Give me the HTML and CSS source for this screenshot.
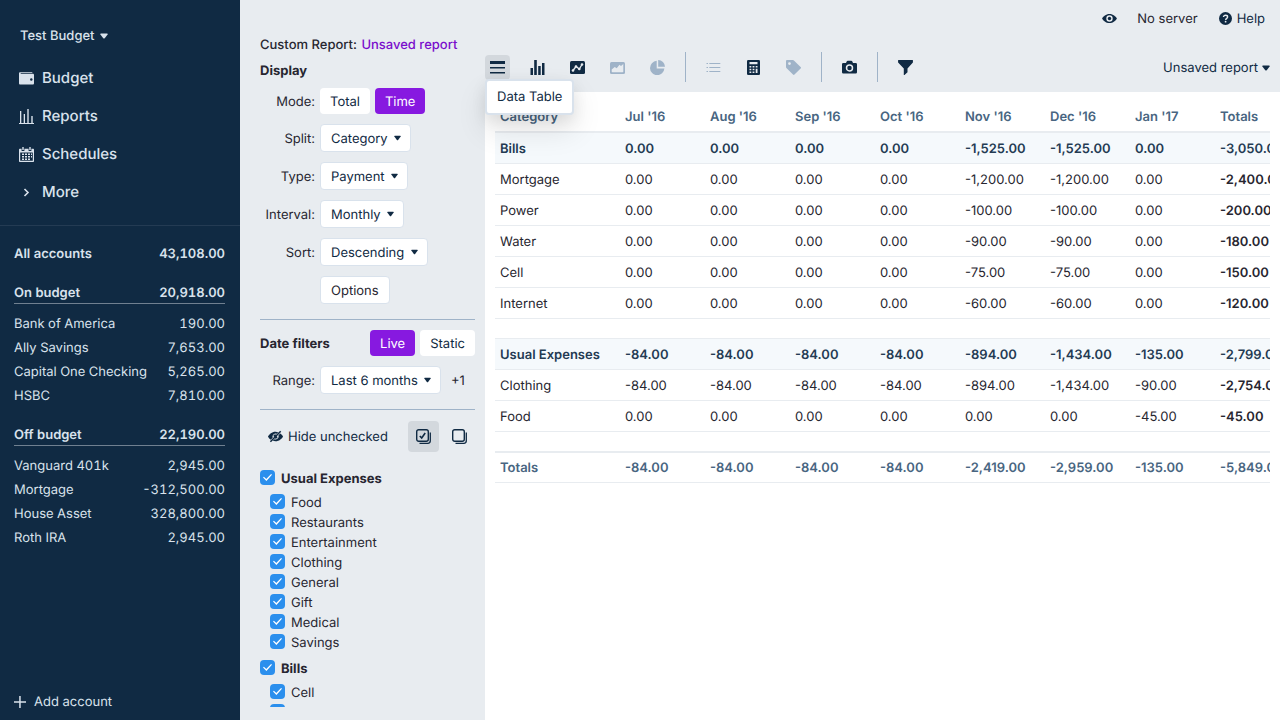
FILE: index.html
```html
<!DOCTYPE html>
<html lang="en">
<head>
<meta charset="utf-8">
<title>Custom Report</title>
<link rel="stylesheet" href="styles.css">
</head>
<body>
<svg class="defs" aria-hidden="true">
  <symbol id="caret" viewBox="0 0 8 6"><path d="M1 .5h6q1 0 .6.9L4.7 5.2q-.7.7-1.4 0L.4 1.4Q0 .5 1 .5z"/></symbol>
</svg>
<div class="app">
  <aside class="sidebar">
    <button class="budget-name">Test Budget <svg class="caret"><use href="#caret"/></svg></button>
    <nav class="nav">
      <a href="#"><svg viewBox="0 0 15 15"><path d="M1.2 1.2h11.6c.5 0 .7.4.7.8H1.7v.7h12c.8 0 1.3.5 1.3 1.2v8.300c0 .7-.5 1.300-1.300 1.300H1.300C.5 13.500 0 13 0 12.200V2.500c0-.8.5-1.300 1.200-1.300z"/><circle cx="12.300" cy="8.500" r="1.200" fill="#102a43"/></svg>Budget</a>
      <a href="#"><svg viewBox="0 0 15 15"><path d="M0 14h15v1H0zM1 2h1.300v12H1zM4.700 5H6v9H4.700zM8.300 0h1.400v14H8.300zM12.300 7h1.400v7h-1.400z"/></svg>Reports</a>
      <a href="#"><svg viewBox="0 0 15 15"><path d="M3.300 0h1.400v3H3.300zM10.300 0h1.400v3h-1.400z"/><path fill-rule="evenodd" d="M1 1.700h1.600V4h2.800V1.700h4.200V4h2.800V1.700H14c.6 0 1 .4 1 1V14c0 .6-.4 1-1 1H1c-.6 0-1-.4-1-1V2.700c0-.6.4-1 1-1zM1.200 5.400v8.400h12.600V5.400z"/><path d="M3 6.500h2v1.500H3zM6 6.500h2v1.500H6zM9 6.500h2v1.500H9zM12 6.500h1v1.500h-1zM3 9h2v1.500H3zM6 9h2v1.500H6zM9 9h2v1.500H9zM12 9h1v1.500h-1zM3 11.500h2V13H3zM6 11.500h2V13H6zM9 11.500h2V13H9z"/></svg>Schedules</a>
      <a href="#"><svg viewBox="0 0 15 15"><path d="M5.500 4l3.500 3.500L5.500 11" fill="none" stroke="currentColor" stroke-width="1.600"/></svg>More</a>
    </nav>
    <div class="accounts">
      <a class="account total" href="#"><span>All accounts</span><span>43,108.00</span></a>
      <a class="account group" href="#"><span>On budget</span><span>20,918.00</span></a>
      <a class="account" href="#"><span>Bank of America</span><span>190.00</span></a>
      <a class="account" href="#"><span>Ally Savings</span><span>7,653.00</span></a>
      <a class="account" href="#"><span>Capital One Checking</span><span>5,265.00</span></a>
      <a class="account" href="#"><span>HSBC</span><span>7,810.00</span></a>
      <a class="account group" href="#"><span>Off budget</span><span>22,190.00</span></a>
      <a class="account" href="#"><span>Vanguard 401k</span><span>2,945.00</span></a>
      <a class="account" href="#"><span>Mortgage</span><span>-312,500.00</span></a>
      <a class="account" href="#"><span>House Asset</span><span>328,800.00</span></a>
      <a class="account" href="#"><span>Roth IRA</span><span>2,945.00</span></a>
    </div>
    <button class="add-account"><svg viewBox="0 0 12 12"><path d="M5.200 0h1.500v12H5.200zM0 5.200h12v1.500H0z"/></svg>Add account</button>
  </aside>

  <main class="main">
    <header class="titlebar">
      <button class="plain" aria-label="Toggle privacy mode"><svg class="i15" viewBox="0 0 15 15"><path fill-rule="evenodd" d="M7.500 3C3.800 3 1.300 5.600.3 7.100q-.3.400 0 .8C1.300 9.400 3.800 12 7.500 12s6.200-2.600 7.200-4.100q.3-.4 0-.8C13.700 5.600 11.200 3 7.500 3zm0 1.300a3.200 3.200 0 1 1 0 6.400 3.200 3.200 0 0 1 0-6.400z"/><circle cx="7.500" cy="7.500" r="1.700"/></svg></button>
      <span class="server">No server</span>
      <button class="plain help"><svg class="i13" viewBox="0 0 13 13"><circle cx="6.500" cy="6.500" r="6.500"/><path d="M4.500 5.100c0-2.500 4.100-2.300 4.100-.1 0 1.400-1.900 1.400-1.900 2.900" fill="none" stroke="#e8ecf0" stroke-width="1.400"/><circle cx="6.600" cy="9.700" r=".9" fill="#e8ecf0"/></svg>Help</button>
    </header>

    <div class="report">
      <section class="options">
        <h1 class="report-name">Custom Report: <a href="#">Unsaved report</a></h1>
        <h2 class="heading">Display</h2>
        <div class="field mode"><span class="label">Mode:</span><button class="seg">Total</button><button class="seg on">Time</button></div>
        <div class="field"><label class="label" for="split">Split:</label><span class="select"><select id="split"><option>Category</option></select><svg class="caret"><use href="#caret"/></svg></span></div>
        <div class="field"><label class="label" for="type">Type:</label><span class="select"><select id="type"><option>Payment</option></select><svg class="caret"><use href="#caret"/></svg></span></div>
        <div class="field"><label class="label" for="interval">Interval:</label><span class="select"><select id="interval"><option>Monthly</option></select><svg class="caret"><use href="#caret"/></svg></span></div>
        <div class="field"><label class="label" for="sort">Sort:</label><span class="select"><select id="sort"><option>Descending</option></select><svg class="caret"><use href="#caret"/></svg></span></div>
        <div class="field"><span class="label"></span><button class="boxed">Options</button></div>
        <hr class="rule">
        <div class="dates"><h2 class="heading">Date filters</h2><button class="seg on">Live</button><button class="seg">Static</button></div>
        <div class="field"><label class="label" for="range">Range:</label><span class="select"><select id="range"><option>Last 6 months</option></select><svg class="caret"><use href="#caret"/></svg></span><span class="extra">+1</span></div>
        <hr class="rule">
        <div class="picker">
          <button class="plain hide"><svg class="i15" viewBox="0 0 15 15"><path d="M7.500 2.800c1 0 1.900.2 2.700.5L8.800 4.700a3.200 3.200 0 0 0-4.100 4.100L2.800 10.700C1.600 9.900.7 8.700.2 7.900q-.3-.4 0-.8C1.300 5.400 3.800 2.800 7.500 2.800zM12.300 4.400c1.100.8 2 1.900 2.500 2.700q.3.400 0 .8c-1.100 1.700-3.600 4.300-7.300 4.300-1 0-1.900-.2-2.700-.5l1.500-1.400a3.200 3.200 0 0 0 4.100-4.100z"/><path d="M2.400 12.800L12.700 2.200M5.800 7.400l1.800-1.800M7.300 9.400l1.800-1.800" fill="none" stroke="currentColor" stroke-width="1.500"/></svg>Hide unchecked</button>
          <button class="square on" aria-label="Check all"><svg class="i15" viewBox="0 0 15 15"><rect x=".7" y=".7" width="11.600" height="11.600" rx="2" fill="none" stroke="currentColor" stroke-width="1.400"/><path d="M14.300 3.500v8.300q0 2.500-2.500 2.500H3.500" fill="none" stroke="currentColor" stroke-width="1.300"/><path d="M3.800 7l1.900 2L9.200 4" fill="none" stroke="currentColor" stroke-width="1.600"/></svg></button>
          <button class="square" aria-label="Uncheck all"><svg class="i15" viewBox="0 0 15 15"><rect x=".7" y=".7" width="11.600" height="11.600" rx="2" fill="none" stroke="currentColor" stroke-width="1.400"/><path d="M14.300 3.500v8.300q0 2.500-2.500 2.500H3.500" fill="none" stroke="currentColor" stroke-width="1.300"/></svg></button>
        </div>
        <div class="categories">
          <label class="cat parent"><input type="checkbox" checked>Usual Expenses</label>
          <div class="children">
            <label class="cat"><input type="checkbox" checked>Food</label>
            <label class="cat"><input type="checkbox" checked>Restaurants</label>
            <label class="cat"><input type="checkbox" checked>Entertainment</label>
            <label class="cat"><input type="checkbox" checked>Clothing</label>
            <label class="cat"><input type="checkbox" checked>General</label>
            <label class="cat"><input type="checkbox" checked>Gift</label>
            <label class="cat"><input type="checkbox" checked>Medical</label>
            <label class="cat"><input type="checkbox" checked>Savings</label>
          </div>
          <label class="cat parent"><input type="checkbox" checked>Bills</label>
          <div class="children">
            <label class="cat"><input type="checkbox" checked>Cell</label>
            <label class="cat"><input type="checkbox" checked aria-label="Internet"></label>
          </div>
        </div>
      </section>

      <section class="result">
        <div class="toolbar">
          <div class="tool-wrap">
            <button class="tool on" aria-label="Data Table"><svg class="i15" viewBox="0 0 15 15"><path d="M0 1h15v3H0zM0 7h15v1.500H0zM0 12h15v1.500H0z"/></svg></button>
            <div class="tooltip" role="tooltip">Data Table</div>
          </div>
          <button class="tool" aria-label="Bar graph"><svg class="i15" viewBox="0 0 15 15"><path d="M.5 8H3v7H.5zM4.200 0h2.600v15H4.200zM8.200 6h2.500v9H8.200zM12 3h2.500v12H12z"/></svg></button>
          <button class="tool" aria-label="Line graph"><svg class="i15" viewBox="0 0 15 15"><rect y="1" width="15" height="13" rx="1.500"/><path d="M3 10.500l3-4 3.300 2.500L12 4.500" fill="none" stroke="#e8ecf0" stroke-width="1.300"/><g fill="#e8ecf0"><circle cx="3" cy="10.500" r="1.300"/><circle cx="6" cy="6.500" r="1.300"/><circle cx="9.300" cy="9" r="1.300"/><circle cx="12" cy="4.500" r="1.300"/></g></svg></button>
          <button class="tool" disabled aria-label="Area graph"><svg class="i15" viewBox="0 0 15 15"><rect y="2" width="15" height="12" rx="1.500"/><path d="M1.700 9.500l3-2.500 2 1.200 2.800-3.400 1.500 1.100L13.300 4v7.500q0 .8-.8.800h-10q-.8 0-.8-.8z" fill="#e8ecf0"/></svg></button>
          <button class="tool" disabled aria-label="Donut graph"><svg class="i15" viewBox="0 0 15 15"><path d="M6.700.8v7.700h7.700A7.200 7.200 0 1 1 6.700.8z"/><path d="M8.200 0A7 7 0 0 1 15 6.800H8.200z"/></svg></button>
          <span class="sep"></span>
          <button class="tool" disabled aria-label="Show legend"><svg class="i15" viewBox="0 0 15 15"><path d="M3.300 3h11v1h-11zM3.300 7h11v1h-11zM3.300 11h11v1h-11zM.5 3h1.500v1H.5zM.5 7h1.500v1H.5zM.5 11h1.500v1H.5z"/></svg></button>
          <button class="tool" aria-label="Show summary"><svg class="i15" viewBox="0 0 15 15"><rect x="1" width="13" height="15" rx="1.300"/><path d="M3.500 2h8v2.200h-8zM3.500 6h1.800v1.500H3.500zM6.600 6h1.800v1.500H6.600zM9.700 6h1.800v1.500H9.700zM3.500 8.800h1.800v1.500H3.500zM6.600 8.800h1.800v1.500H6.600zM3.500 11.500h1.800V13H3.500zM6.600 11.500h1.800V13H6.600zM9.700 8.800h1.800V13H9.700z" fill="#e8ecf0"/></svg></button>
          <button class="tool" disabled aria-label="Show labels"><svg class="i15" viewBox="0 0 15 15"><path fill-rule="evenodd" d="M1 0h6q.5 0 .9.400l6.700 6.600q.8.700 0 1.500L8.500 14.600q-.8.800-1.500 0L.4 7.900Q0 7.500 0 7V1q0-1 1-1zm2.500 2.200a1.400 1.400 0 1 0 0 2.800 1.400 1.400 0 0 0 0-2.800z"/></svg></button>
          <span class="sep"></span>
          <button class="tool" aria-label="Take snapshot"><svg class="i15" viewBox="0 0 15 15"><path d="M4 3l.8-1.700q.3-.5.900-.5h3.600q.6 0 .9.500L11 3h2.700q1.300 0 1.300 1.200v8q0 1.300-1.300 1.300H1.300Q0 13.500 0 12.200v-8Q0 3 1.300 3z"/><circle cx="7.500" cy="7.900" r="3" fill="none" stroke="#e8ecf0" stroke-width="1.500"/></svg></button>
          <span class="sep"></span>
          <button class="tool" aria-label="Filter"><svg class="i15" viewBox="0 0 15 15"><path d="M.5 0h14q.8 0 .4 1.500v1.100L9.500 8.500v3.700L6.500 15H5.800V8.500L.1 2.600V1.500Q-.3 0 .5 0z"/></svg></button>
          <button class="plain saved">Unsaved report <svg class="caret"><use href="#caret"/></svg></button>
        </div>

        <div class="sheet">
          <table class="table">
            <thead><tr><th>Category</th><th>Jul '16</th><th>Aug '16</th><th>Sep '16</th><th>Oct '16</th><th>Nov '16</th><th>Dec '16</th><th>Jan '17</th><th>Totals</th></tr></thead>
            <tbody>
              <tr class="group"><td>Bills</td><td>0.00</td><td>0.00</td><td>0.00</td><td>0.00</td><td>-1,525.00</td><td>-1,525.00</td><td>0.00</td><td>-3,050.00</td></tr>
              <tr><td>Mortgage</td><td>0.00</td><td>0.00</td><td>0.00</td><td>0.00</td><td>-1,200.00</td><td>-1,200.00</td><td>0.00</td><td>-2,400.00</td></tr>
              <tr><td>Power</td><td>0.00</td><td>0.00</td><td>0.00</td><td>0.00</td><td>-100.00</td><td>-100.00</td><td>0.00</td><td>-200.00</td></tr>
              <tr><td>Water</td><td>0.00</td><td>0.00</td><td>0.00</td><td>0.00</td><td>-90.00</td><td>-90.00</td><td>0.00</td><td>-180.00</td></tr>
              <tr><td>Cell</td><td>0.00</td><td>0.00</td><td>0.00</td><td>0.00</td><td>-75.00</td><td>-75.00</td><td>0.00</td><td>-150.00</td></tr>
              <tr><td>Internet</td><td>0.00</td><td>0.00</td><td>0.00</td><td>0.00</td><td>-60.00</td><td>-60.00</td><td>0.00</td><td>-120.00</td></tr>
            </tbody>
            <tbody>
              <tr class="gap"><td colspan="9"></td></tr>
              <tr class="group"><td>Usual Expenses</td><td>-84.00</td><td>-84.00</td><td>-84.00</td><td>-84.00</td><td>-894.00</td><td>-1,434.00</td><td>-135.00</td><td>-2,799.00</td></tr>
              <tr><td>Clothing</td><td>-84.00</td><td>-84.00</td><td>-84.00</td><td>-84.00</td><td>-894.00</td><td>-1,434.00</td><td>-90.00</td><td>-2,754.00</td></tr>
              <tr><td>Food</td><td>0.00</td><td>0.00</td><td>0.00</td><td>0.00</td><td>0.00</td><td>0.00</td><td>-45.00</td><td>-45.00</td></tr>
            </tbody>
            <tfoot>
              <tr class="gap last"><td colspan="9"></td></tr>
              <tr class="sum"><td>Totals</td><td>-84.00</td><td>-84.00</td><td>-84.00</td><td>-84.00</td><td>-2,419.00</td><td>-2,959.00</td><td>-135.00</td><td>-5,849.00</td></tr>
            </tfoot>
          </table>
        </div>
      </section>
    </div>
  </main>
</div>
</body>
</html>
```
FILE: styles.css
```css
* { box-sizing: border-box; }
body { margin: 0; font: 13px/16px Inter, "Liberation Sans", sans-serif; color: #272630; background: #e8ecf0; text-rendering: geometricPrecision; }
button, select, input { font: inherit; color: inherit; margin: 0; text-rendering: inherit; }
button { border: 0; background: none; padding: 0; display: flex; align-items: center; cursor: pointer; white-space: nowrap; }
a { color: inherit; text-decoration: none; }
svg { fill: currentColor; flex: none; display: block; }
h1, h2 { margin: 0; font-size: 13px; }
.defs { position: absolute; width: 0; height: 0; }
.caret { width: 7px; height: 6px; }
.i15 { width: 15px; height: 15px; }
.i13 { width: 13px; height: 13px; }

.app { display: flex; height: 100vh; }

/* Sidebar */
.sidebar { width: 240px; flex: none; display: flex; flex-direction: column; background: #102a43; color: #d9e2ec; }
.budget-name { gap: 5px; margin: 28px 20px 15px; font-weight: 500; }
.budget-name .caret { width: 8px; }
.nav { display: flex; flex-direction: column; padding-bottom: 14px; border-bottom: 1px solid #243b53; }
.nav a { display: flex; align-items: center; gap: 8px; height: 38px; padding-left: 19px; font-size: 15px; font-weight: 500; }
.nav svg { width: 15px; height: 15px; }
.accounts { display: flex; flex-direction: column; padding: 15px 15px 0 14px; font-feature-settings: "tnum"; }
.account { display: flex; justify-content: space-between; align-items: center; height: 24px; padding-top: 1px; }
.account.total, .account.group { font-weight: 600; }
.account.group { height: 22px; margin: 17px 0 7px; border-bottom: 1px solid #708090; }
.add-account { gap: 8px; margin: auto 14px 10px; }
.add-account svg { width: 12px; height: 12px; }

/* Page */
.main { flex: 1; min-width: 0; display: flex; flex-direction: column; }
.titlebar { display: flex; align-items: center; justify-content: flex-end; height: 36px; padding-right: 15px; }
.plain { color: #102a43; }
.server, .help { padding-top: 1px; }
.server { margin: 0 21px 0 20px; }
.help { gap: 5px; }
.report { flex: 1; min-height: 0; display: flex; }

/* Options panel */
.options { width: 245px; flex: none; display: flex; flex-direction: column; padding: 0 10px 13px 20px; }
.report-name { padding-top: 1px; font-weight: 500; white-space: nowrap; }
.report-name a { color: #7a0ecc; margin-left: 1px; }
.heading { font-weight: 700; }
.report-name + .heading { margin-top: 10px; }
.field { display: flex; align-items: center; margin-top: 10px; }
.field.mode { margin-top: 9px; }
.label { width: 55px; margin-right: 5px; padding-top: 1px; text-align: right; }
.seg { height: 26px; padding: 1px 10px 0; border-radius: 4px; background: #fff; color: #102a43; }
.seg + .seg { margin-left: 5px; }
.seg.on { background: #8719e0; color: #fff; }
.select { position: relative; display: flex; }
.select select, .boxed { height: 28px; border: 1px solid #d9e2ec; border-radius: 4px; background: #fff; }
.select select { appearance: none; padding: 1px 22px 0 10px; color: #102a43; }
.select .caret { position: absolute; right: 10px; top: 11px; color: #102a43; pointer-events: none; }
.boxed { padding: 1px 10px 0; }
.extra { margin-left: 10px; padding-top: 1px; }
.rule { width: 100%; height: 1px; margin: 15px 0 10px; border: 0; background: #9fb3c8; }
.dates { display: flex; align-items: center; }
.dates .heading { margin-right: auto; padding-top: 1px; }
.picker { display: flex; align-items: flex-start; gap: 5px; margin: 1px 0 16px; }
.hide { gap: 5px; height: 31px; margin: 0 auto 0 8px; }
.square { padding: 8px; border-radius: 4px; color: #102a43; }
.square.on { background: #d3d8dd; }
.categories { flex: 1; min-height: 0; overflow: hidden; }
.cat { display: flex; align-items: center; gap: 6px; height: 20px; padding-top: 1px; }
.cat.parent { font-weight: 700; }
.cat input { appearance: none; width: 15px; height: 15px; margin-bottom: 2px; border-radius: 4px; background: #2b8fed; display: grid; place-items: center; }
.cat input:checked::before { content: ""; width: 9px; height: 7px; background: #fff; clip-path: polygon(0 50%, 10% 38%, 36% 70%, 90% 0, 100% 12%, 38% 100%); }
.children { padding: 4px 0 6px 10px; }

/* Toolbar */
.result { flex: 1; min-width: 0; display: flex; flex-direction: column; }
.toolbar { display: flex; align-items: center; gap: 15px; padding: 16px 10px 10px 0; }
.tool-wrap { position: relative; }
.tool { padding: 5px; border-radius: 4px; color: #102a43; }
.tool.on { background: #d3d8dd; }
.tool:disabled { color: #9fb3c8; }
.sep { width: 1px; height: 30px; background: #9fb3c8; }
.saved { gap: 4px; margin-left: auto; padding-top: 1px; }
.saved .caret { width: 8px; }
.tooltip { position: absolute; z-index: 1; top: 24px; left: 0; padding: 8px 10px; border: 2px solid #d9e2ec; border-radius: 4px; background: #fff; color: #102a43; white-space: nowrap; box-shadow: 0 15px 30px rgba(0, 0, 0, .11), 0 5px 15px rgba(0, 0, 0, .08); }

/* Table */
.sheet { flex: 1; min-height: 0; padding: 10px 10px 0; background: #fff; display: grid; grid-template-columns: minmax(0, 1fr); align-content: start; overflow: hidden; }
.table { display: block; overflow: hidden; border-spacing: 0; white-space: nowrap; }
.table th, .table td { width: 85px; min-width: 85px; height: 31px; padding: 1px 5px 0; text-align: left; border-bottom: 1px solid #e8ecf0; }
.table th:first-child, .table td:first-child { width: 125px; min-width: 125px; }
.table th { font-weight: 600; color: #486581; border-bottom-width: 2px; }
.table td:last-child { font-weight: 600; }
.table .group td { background: #f5f9fc; color: #243b53; font-weight: 600; }
.table .gap td { height: 20px; }
.table .last td { height: 21px; border-bottom-width: 2px; }
.table .sum td { height: 30px; color: #486581; font-weight: 600; }
```
